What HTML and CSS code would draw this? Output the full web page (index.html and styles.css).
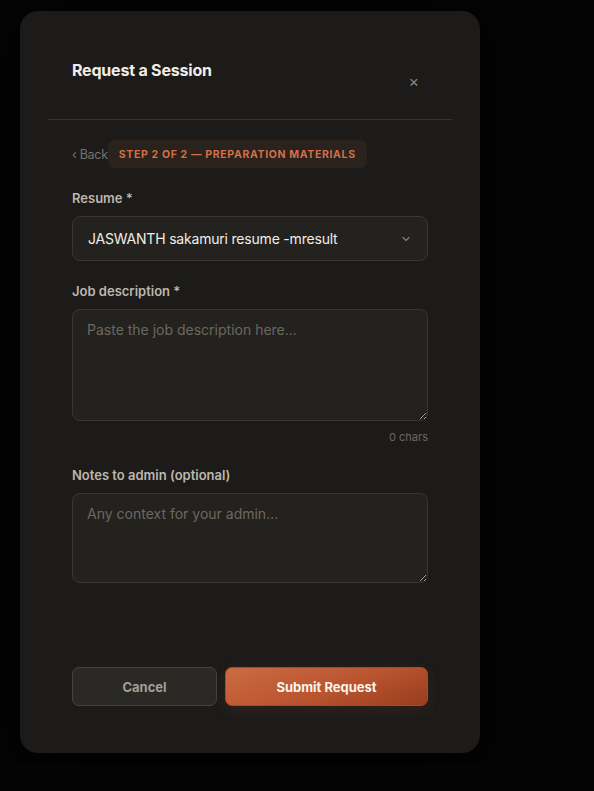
FILE: index.html
```html
<!DOCTYPE html>
<html lang="en">
<head>
	<meta charset="UTF-8">
	<title>Request a Session</title>
	<link rel="stylesheet" href="styles.css">
</head>
<body>
	<div class="modal">
		<div class="modal-head">
			<h2 class="modal-title">Request a Session</h2>
			<button class="close" type="button">&times;</button>
		</div>
		<div class="modal-body">
			<div class="step-row">
				<a href="javascript:;" class="back">&lsaquo; Back</a>
				<span class="step">Step 2 of 2 &mdash; Preparation materials</span>
			</div>

			<div class="field">
				<label class="label">Resume *</label>
				<div class="select">
					<span>JASWANTH sakamuri resume -mresult</span>
					<svg width="10" height="10" viewBox="0 0 10 10"><path d="M2 3.5 L5 6.5 L8 3.5" fill="none" stroke="#7e7a72" stroke-width="1.3" stroke-linecap="round" stroke-linejoin="round"/></svg>
				</div>
			</div>

			<div class="field">
				<label class="label">Job description *</label>
				<textarea class="input jd" placeholder="Paste the job description here..."></textarea>
				<div class="count">0 chars</div>
			</div>

			<div class="field notes">
				<label class="label">Notes to admin (optional)</label>
				<textarea class="input note" placeholder="Any context for your admin..."></textarea>
			</div>

			<div class="actions">
				<button class="btn cancel" type="button">Cancel</button>
				<button class="btn submit" type="button">Submit Request</button>
			</div>
		</div>
	</div>
</body>
</html>
```

FILE: styles.css
```css
* {
	box-sizing: border-box;
}
body {
	margin: 0;
	background: #040404;
	font-family: Inter, "Noto Sans", sans-serif;
	color: #e8e4dc;
}
.modal {
	width: 460px;
	height: 742px;
	margin: 11px 20px;
	padding: 0 28px;
	background: #1c1b19;
	border-radius: 18px;
	box-shadow: 0 10px 50px #000;
}
.modal-head {
	display: flex;
	justify-content: space-between;
	align-items: flex-start;
	height: 109px;
	padding: 49px 24px 0;
	border-bottom: 1px solid #34322e;
}
.modal-title {
	margin: 0;
	font-size: 16px;
	line-height: 20px;
	font-weight: 700;
	color: #f1ede6;
	letter-spacing: -0.2px;
}
.close {
	margin-top: 13px;
	margin-right: 9px;
	padding: 0;
	border: 0;
	background: none;
	color: #8a867e;
	font-family: inherit;
	font-size: 16px;
	line-height: 16px;
}
.modal-body {
	padding: 0 24px;
}
.step-row {
	display: flex;
	align-items: center;
	margin-top: 20px;
}
.back {
	color: #77736b;
	font-size: 12.5px;
	letter-spacing: -0.3px;
	text-decoration: none;
}
.step {
	display: inline-flex;
	align-items: center;
	height: 28px;
	margin-left: 0;
	padding: 0 11px;
	border-radius: 6px;
	background: #2a221d;
	color: #d46f48;
	font-size: 10.5px;
	font-weight: 700;
	letter-spacing: 0.65px;
	text-transform: uppercase;
}
.field {
	margin-top: 22px;
}
.label {
	display: block;
	margin-bottom: 10px;
	font-size: 13px;
	line-height: 16px;
	font-weight: 600;
	color: #bcb7ad;
}
.select {
	display: flex;
	justify-content: space-between;
	align-items: center;
	height: 45px;
	padding: 0 16px 0 15px;
	border: 1px solid #393732;
	border-radius: 8px;
	background: #23221f;
	font-size: 14px;
	letter-spacing: -0.2px;
	color: #f1ede6;
}
.input {
	display: block;
	width: 100%;
	padding: 11px 14px;
	border: 1px solid #393732;
	border-radius: 8px;
	background: #23221f;
	color: #f1ede6;
	font-family: inherit;
	font-size: 14px;
	line-height: 18px;
	resize: vertical;
	outline: none;
}
.input::placeholder {
	color: #6c685f;
}
.jd {
	height: 112px;
}
.note {
	height: 90px;
}
.count {
	margin-top: 9px;
	text-align: right;
	font-size: 11px;
	color: #6c685f;
}
.notes {
	margin-top: 23px;
}
.actions {
	display: flex;
	gap: 8px;
	margin-top: 84px;
}
.btn {
	height: 39px;
	border-radius: 7px;
	font-family: inherit;
	font-size: 13px;
	font-weight: 700;
}
.cancel {
	width: 145px;
	border: 1px solid #45433e;
	background: #2a2926;
	color: #a39f96;
}
.submit {
	flex: 1;
	border: 1px solid #a84a26;
	background: linear-gradient(160deg, #cc6b43 0%, #b9542f 55%, #983d1d 100%);
	color: #fbf3ec;
	box-shadow: 0 4px 14px rgba(200, 90, 50, 0.12);
}
```
